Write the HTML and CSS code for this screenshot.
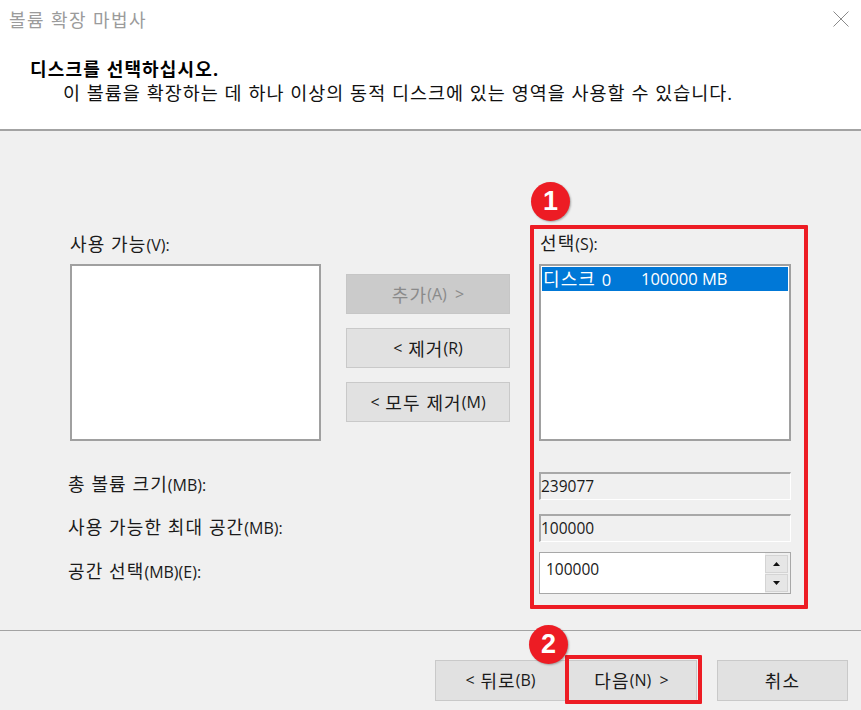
FILE: index.html
```html
<!DOCTYPE html>
<html lang="ko">
<head>
<meta charset="utf-8">
<title>볼륨 확장 마법사</title>
<link rel="stylesheet" href="styles.css">
</head>
<body>
<div class="dialog">
  <header class="head">
    <div class="titlebar">
      <span class="title">볼륨 확장 마법사</span>
      <svg class="close" width="16" height="16" viewBox="0 0 16 16"><path d="M.5.5l15 15M15.500.5l-15 15" stroke="#8a8a8a" stroke-width="1" fill="none"/></svg>
    </div>
    <h1 class="heading">디스크를 선택하십시오.</h1>
    <p class="sub">이 볼륨을 확장하는 데 하나 이상의 동적 디스크에 있는 영역을 사용할 수 있습니다.</p>
  </header>
  <main class="body">
    <div class="pick">
      <div class="col left">
        <div class="label">사용 가능<span class="lat">(V):</span></div>
        <div class="list"></div>
      </div>
      <div class="actions">
        <div class="btn disabled">추가<span class="lat">(A)&nbsp;&nbsp;&gt;</span></div>
        <div class="btn"><span class="lat">&lt;</span>&nbsp;제거<span class="lat">(R)</span></div>
        <div class="btn"><span class="lat">&lt;</span>&nbsp;모두 제거<span class="lat">(M)</span></div>
      </div>
      <div class="col right">
        <div class="label">선택<span class="lat">(S):</span></div>
        <div class="list">
          <div class="item"><span class="disk">디스크 <span class="digit">0</span></span><span class="digit">100000 MB</span></div>
        </div>
      </div>
    </div>
    <div class="rows">
      <div class="row r1"><span class="rlabel">총 볼륨 크기<span class="lat">(MB):</span></span><div class="field digit">239077</div></div>
      <div class="row r2"><span class="rlabel">사용 가능한 최대 공간<span class="lat">(MB):</span></span><div class="field digit">100000</div></div>
      <div class="row r3"><span class="rlabel">공간 선택<span class="lat">(MB)(E):</span></span>
        <div class="spin">
          <span class="val digit">100000</span>
          <div class="arrows">
            <div class="arrow"><svg width="7" height="4" viewBox="0 0 7 4"><path d="M3.500 0l3.500 4H0z" fill="#111"/></svg></div>
            <div class="arrow"><svg width="7" height="4" viewBox="0 0 7 4"><path d="M0 0h7L3.500 4z" fill="#111"/></svg></div>
          </div>
        </div>
      </div>
    </div>
  </main>
  <footer class="foot">
    <div class="btn fbtn"><span class="lat">&lt;</span>&nbsp;뒤로<span class="lat">(B)</span></div>
    <div class="btn fbtn next">다음<span class="lat">(N)&nbsp;&nbsp;&gt;</span></div>
    <div class="btn fbtn cancel">취소</div>
  </footer>
  <div class="mark box1"></div>
  <div class="mark box2"></div>
  <div class="badge b1">1</div>
  <div class="badge b2">2</div>
</div>
</body>
</html>
```
FILE: styles.css
```css
* { box-sizing: border-box; }
html, body { margin: 0; padding: 0; }
body { width: 861px; height: 710px; overflow: hidden; background: #f0f0f0; color: #1a1a1a;
  font-family: "Open Sans", "Noto Sans CJK KR", sans-serif; font-size: 18px; letter-spacing: 1.100px; }
.lat { font-size: 16px; letter-spacing: 0; }
.digit { font-size: 15.500px; letter-spacing: 0; }
.dialog { position: relative; width: 861px; height: 710px; display: flex; flex-direction: column; }
.head { height: 131px; background: #fff; border-bottom: 2px solid #a3a3a3; padding: 0 0 0 30px; }
.titlebar { display: flex; justify-content: space-between; align-items: center; height: 38px; margin-left: -21px; padding-right: 12px; }
.title { color: #9b9b9b; font-size: 18px; letter-spacing: 1.400px; }
.heading { margin: 18px 0 0; font-size: 18px; line-height: 26px; font-weight: 700; color: #000; letter-spacing: 1.150px; }
.sub { margin: -1px 0 0 33px; font-size: 18.500px; line-height: 24px; letter-spacing: 1px; color: #111; }
.body { height: 499px; padding: 99px 0 0 70px; }
.pick { display: flex; align-items: flex-end; }
.col { display: flex; flex-direction: column; }
.col.left { width: 251px; }
.col.right { width: 252px; margin-left: 29px; }
.label { height: 31px; line-height: 22px; }
.list { height: 177px; background: #fff; border: 2px solid #a0a0a0; padding: 1px; }
.col.right .label { height: 34px; padding-left: 1px; padding-top: 2px; }
.actions { display: flex; flex-direction: column; gap: 14px; width: 164px; margin: 0 0 19px 25px; }
.btn { display: flex; align-items: center; justify-content: center; height: 40px; background: #e1e1e1; border: 1px solid #c9c9c9; padding-bottom: 1px; }
.btn.disabled { background: #cbcbcb; border-color: #c6c6c6; color: #8a8a8a; }
.item { display: flex; height: 24px; background: #0078d7; color: #fff; align-items: center; padding: 0 0 2px 1px; }
.item .digit { font-size: 16.500px; }
.disk { width: 98px; }
.rows { display: flex; flex-direction: column; margin-top: 31px; margin-left: -2px; }
.row { display: flex; align-items: center; justify-content: space-between; width: 723px; }
.rlabel { position: relative; top: -3px; }
.r1 { height: 28px; }
.r2 { height: 28px; margin-top: 14px; }
.r3 { height: 42px; margin-top: 10px; }
.r2 .rlabel { top: -2px; }
.r3 .rlabel { top: -3px; }
.field { width: 252px; height: 100%; background: #f0f0f0; border: 1px solid; border-color: #a8a8a8 #fff #fff #a8a8a8; border-width: 2px 1px 1px 2px; padding-left: 0; line-height: 24px; }
.spin { width: 252px; height: 100%; display: flex; background: #fff; border: 1px solid #a8a8a8; }
.val { flex: 1; padding: 2px 0 0 6px; line-height: 28px; }
.arrows { width: 25px; display: flex; flex-direction: column; gap: 1px; padding: 2px 2px 1px 0; background: #f0f0f0; }
.arrow { flex: 1; display: flex; align-items: center; justify-content: center; background: #e6e6e6; border: 1px solid #d4d4d4; }
.foot { flex: 1; border-top: 1px solid #a3a3a3; display: flex; padding: 29px 0 0 435px; align-items: flex-start; }
.fbtn { width: 131px; height: 41px; }
.fbtn.cancel { width: 131px; margin-left: 20px; }
.mark { position: absolute; border: 4px solid #ed1c24; border-radius: 1px; }
.box1 { left: 530px; top: 225px; width: 278px; height: 384px; }
.box2 { left: 565px; top: 655px; width: 137px; height: 49px; }
.badge { position: absolute; width: 39px; height: 39px; border-radius: 50%; background: #ed1c24; color: #fff; font-family: "Liberation Sans", sans-serif; font-weight: 700; font-size: 27px; letter-spacing: 0; display: flex; align-items: center; justify-content: center; box-shadow: 1px 1px 2px rgba(0,0,0,.3); }
.b1 { left: 531px; top: 182px; }
.b2 { left: 529px; top: 625px; }
```
